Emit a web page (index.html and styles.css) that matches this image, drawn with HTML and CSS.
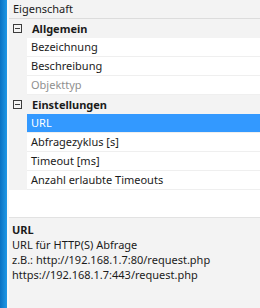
FILE: index.html
```html
<!DOCTYPE html>
<html lang="de">
<head>
    <meta charset="UTF-8">
    <title>Eigenschaften</title>
    <link rel="stylesheet" href="styles.css">
</head>
<body>
    <div class="window">
        <div class="side-bar"></div>
        <div class="panel">
            <div class="grid">
                <div class="grid-header">Eigenschaft</div>

                <div class="category">
                    <span class="toggle"></span>
                    <span class="category-name">Allgemein</span>
                </div>
                <div class="prop"><span class="prop-name">Bezeichnung</span></div>
                <div class="prop"><span class="prop-name">Beschreibung</span></div>
                <div class="prop disabled"><span class="prop-name">Objekttyp</span></div>

                <div class="category">
                    <span class="toggle"></span>
                    <span class="category-name">Einstellungen</span>
                </div>
                <div class="prop selected"><span class="prop-name">URL</span></div>
                <div class="prop"><span class="prop-name">Abfragezyklus [s]</span></div>
                <div class="prop"><span class="prop-name">Timeout [ms]</span></div>
                <div class="prop"><span class="prop-name">Anzahl erlaubte Timeouts</span></div>
            </div>

            <div class="help">
                <div class="help-title">URL</div>
                <div>URL für HTTP(S) Abfrage</div>
                <div>z.B.: http://192.168.1.7:80/request.php</div>
                <div>https://192.168.1.7:443/request.php</div>
            </div>
        </div>
    </div>
</body>
</html>
```

FILE: styles.css
```css
* {
    margin: 0;
    padding: 0;
    box-sizing: border-box;
}

body {
    font-family: 'Noto Sans', 'Open Sans', sans-serif;
    font-size: 11px;
    color: #1b1b1b;
    background-color: #f3f3f3;
}

.window {
    display: flex;
    width: 260px;
    height: 308px;
    overflow: hidden;
}

.side-bar {
    width: 7px;
    flex-shrink: 0;
    background: linear-gradient(to right, #0a72c2, #1f98e6);
    border-right: 2px solid #f9f9f9;
    box-sizing: content-box;
}

.panel {
    flex: 1;
    display: flex;
    flex-direction: column;
}

.grid {
    height: 217px;
    background-color: #fff;
    border-bottom: 1px solid #e2e2e2;
    box-sizing: content-box;
}

.grid-header {
    height: 19px;
    line-height: 17px;
    padding-left: 4px;
    background-color: #f3f3f3;
    border-bottom: 1px solid #dcdcdc;
}

.category {
    display: flex;
    align-items: center;
    height: 19px;
    background-color: #f3f3f3;
}

.toggle {
    position: relative;
    width: 9px;
    height: 9px;
    margin-left: 4px;
    border: 1px solid #3c3c3c;
}

.toggle::after {
    content: '';
    position: absolute;
    left: 1px;
    top: 3px;
    width: 5px;
    height: 1px;
    background-color: #3c3c3c;
}

.category-name {
    margin-left: 10px;
    font-weight: bold;
}

.prop {
    height: 19px;
    padding-left: 18px;
    background-color: #f3f3f3;
}

.prop-name {
    display: block;
    height: 19px;
    line-height: 18px;
    padding-left: 4px;
    background-color: #fff;
    border-bottom: 1px solid #efefef;
}

.prop.disabled .prop-name {
    color: #8f8f8f;
}

.prop.selected .prop-name {
    background-color: #3399ff;
    color: #fff;
}

.help {
    flex: 1;
    padding: 4px 3px;
    line-height: 15px;
    background-color: #f3f3f3;
}

.help-title {
    font-weight: bold;
}
```
